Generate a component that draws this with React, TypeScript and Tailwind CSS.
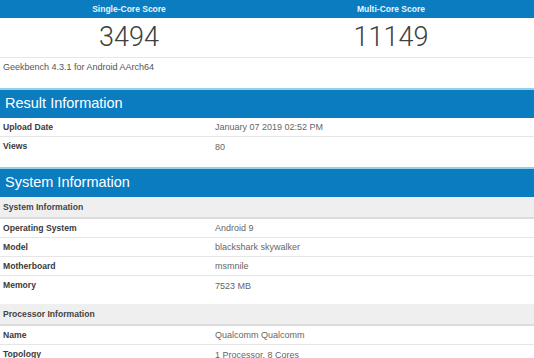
import React from "react";

const font = { fontFamily: '"Liberation Sans", Arial, sans-serif' };

function Row({ label, value, last }: { label: string; value: string; last?: boolean }) {
  return (
    <div className={`flex h-[19px] items-center leading-none ${last ? "" : "border-b border-[#e6e6e6]"}`}>
      <div className="w-[215px] pl-[3px] text-[8.6px] font-bold text-[#3a3a3a]">{label}</div>
      <div className="flex-1 pt-[1px] text-[9px] text-[#666]">{value}</div>
    </div>
  );
}

function Band({ title }: { title: string }) {
  return (
    <div className="border-t-2 border-[#8dd3ee]">
      <div className="flex h-[28px] items-center bg-[#0b7cc0] pl-[5px] text-[14.5px] text-white">{title}</div>
    </div>
  );
}

function Sub({ title }: { title: string }) {
  return (
    <div className="flex h-[22px] items-center border-b-2 border-[#dcdcdc] bg-[#efefef] pl-[3px] text-[8.6px] font-bold text-[#444]">
      {title}
    </div>
  );
}

export default function App() {
  return (
    <div className="h-[358px] w-[534px] overflow-hidden bg-white" style={font}>
      <div className="flex h-[18px] items-center bg-[#0b7cc0] text-[8.5px] font-bold text-[#e8f4fb]">
        <div className="w-[258px] text-center">Single-Core Score</div>
        <div className="flex-1 pr-[10px] text-center">Multi-Core Score</div>
      </div>
      <div
        className="flex h-[40px] items-center border-b border-[#e8e8e8] text-[27px] font-light text-[#404040]"
        style={{ fontFamily: 'Roboto, "Liberation Sans", sans-serif' }}
      >
        <div className="w-[258px] text-center">3494</div>
        <div className="flex-1 pr-[10px] text-center">11149</div>
      </div>
      <div className="flex h-[20px] items-center pl-[3px] text-[9px] text-[#555]">Geekbench 4.3.1 for Android AArch64</div>
      <div className="h-[10px]" />
      <Band title="Result Information" />
      <Row label="Upload Date" value="January 07 2019 02:52 PM" />
      <Row label="Views" value="80" last />
      <div className="h-[11px]" />
      <Band title="System Information" />
      <Sub title="System Information" />
      <Row label="Operating System" value="Android 9" />
      <Row label="Model" value="blackshark skywalker" />
      <Row label="Motherboard" value="msmnile" />
      <Row label="Memory" value="7523 MB" last />
      <div className="h-[9px]" />
      <Sub title="Processor Information" />
      <Row label="Name" value="Qualcomm Qualcomm" />
      <Row label="Topology" value="1 Processor, 8 Cores" last />
    </div>
  );
}
